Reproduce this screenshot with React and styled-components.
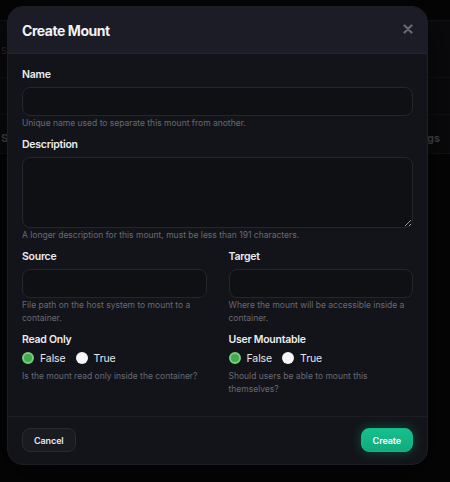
import styled, { createGlobalStyle } from "styled-components";

const GlobalStyle = createGlobalStyle`
  html, body {
    margin: 0;
    padding: 0;
    background: #050506;
    font-family: Inter, "Noto Sans", sans-serif;
    -webkit-font-smoothing: antialiased;
  }
  * { box-sizing: border-box; }
`;

export default function App() {
  return (
    <>
      <GlobalStyle />
      <Page>
        <BackPanel>
          <BackRow $height={57}>
            <BackSmall>Servers</BackSmall>
          </BackRow>
          <BackRow $height={37} />
          <BackRow $height={39} $split>
            <BackTitle>Sc</BackTitle>
            <BackTitle>Settings</BackTitle>
          </BackRow>
        </BackPanel>

        <Modal>
          <Header>
            <Title>Create Mount</Title>
            <CloseButton aria-label="Close">
              <svg width="10" height="10" viewBox="0 0 10 10">
                <path d="M1.5 1.5 L8.5 8.5 M8.5 1.5 L1.5 8.5" stroke="currentColor" strokeWidth="2.3" strokeLinecap="round" />
              </svg>
            </CloseButton>
          </Header>

          <Body>
            <Field>
              <Label>Name</Label>
              <Input type="text" />
              <Help>Unique name used to separate this mount from another.</Help>
            </Field>

            <Field>
              <Label>Description</Label>
              <TextArea />
              <Help>A longer description for this mount, must be less than 191 characters.</Help>
            </Field>

            <Columns>
              <Field>
                <Label>Source</Label>
                <Input type="text" />
                <Help>File path on the host system to mount to a container.</Help>
              </Field>
              <Field>
                <Label>Target</Label>
                <Input type="text" />
                <Help>Where the mount will be accessible inside a container.</Help>
              </Field>
            </Columns>

            <Columns>
              <Field>
                <Label>Read Only</Label>
                <RadioGroup>
                  <RadioOption><Dot $checked />False</RadioOption>
                  <RadioOption><Dot />True</RadioOption>
                </RadioGroup>
                <Help>Is the mount read only inside the container?</Help>
              </Field>
              <Field>
                <Label>User Mountable</Label>
                <RadioGroup>
                  <RadioOption><Dot $checked />False</RadioOption>
                  <RadioOption><Dot />True</RadioOption>
                </RadioGroup>
                <Help>Should users be able to mount this themselves?</Help>
              </Field>
            </Columns>
          </Body>

          <Footer>
            <Button>Cancel</Button>
            <Button $primary>Create</Button>
          </Footer>
        </Modal>
      </Page>
    </>
  );
}

const Page = styled.div`
  position: relative;
  width: 450px;
  height: 482px;
  overflow: hidden;
  background: #050506;
  padding-top: 20px;
`;

const BackPanel = styled.div`
  background: #0a0a0c;
  border-top: 1px solid #121215;
`;

const BackRow = styled.div`
  height: ${({ $height }) => $height}px;
  border-bottom: 1px solid #121215;
  display: flex;
  align-items: center;
  justify-content: ${({ $split }) => ($split ? "space-between" : "flex-start")};
  padding: 0 10px 0 1px;
`;

const BackSmall = styled.span`
  font-size: 9px;
  color: #2e2e33;
  margin-top: 2px;
`;

const BackTitle = styled.span`
  font-size: 11px;
  font-weight: 600;
  color: #4a4a50;
  margin-top: 8px;
`;

const Modal = styled.div`
  position: absolute;
  left: 7px;
  top: 6px;
  width: 421px;
  background: #131419;
  border: 1px solid #1d1e25;
  border-radius: 16px;
  overflow: hidden;
  box-shadow: 0 10px 40px rgba(0, 0, 0, 0.6);
`;

const Header = styled.div`
  height: 47px;
  background: #1b1c25;
  border-bottom: 1px solid #24252e;
  display: flex;
  align-items: center;
  justify-content: space-between;
  padding: 0 14px 0 14px;
`;

const Title = styled.h2`
  margin: 0;
  font-size: 14px;
  font-weight: 700;
  color: #f2f2f4;
  letter-spacing: -0.45px;
`;

const CloseButton = styled.button`
  border: 0;
  background: none;
  padding: 0;
  color: #66676f;
  display: flex;
  margin-top: -3px;
`;

const Body = styled.div`
  padding: 14px 14px 20px 14px;
  display: flex;
  flex-direction: column;
  gap: 8px;
`;

const Columns = styled.div`
  display: grid;
  grid-template-columns: 1fr 1fr;
  column-gap: 22px;
`;

const Field = styled.div`
  display: flex;
  flex-direction: column;
`;

const Label = styled.label`
  font-size: 10.5px;
  line-height: 14px;
  font-weight: 600;
  color: #ececef;
  margin-bottom: 5px;
  letter-spacing: -0.25px;
`;

const Input = styled.input`
  height: 29px;
  width: 100%;
  background: #0f1014;
  border: 1px solid #25262d;
  border-radius: 8px;
  color: #e5e5e8;
  font-family: inherit;
  font-size: 11px;
  padding: 0 10px;
  outline: none;
`;

const TextArea = styled.textarea`
  height: 71px;
  width: 100%;
  background: #0f1014;
  border: 1px solid #25262d;
  border-radius: 8px;
  color: #e5e5e8;
  font-family: inherit;
  font-size: 11px;
  padding: 8px 10px;
  outline: none;
  resize: vertical;
  display: block;
`;

const Help = styled.p`
  margin: 1px 0 0;
  font-size: 8.5px;
  line-height: 13px;
  color: #686a74;
`;

const RadioGroup = styled.div`
  display: flex;
  align-items: center;
  gap: 10px;
  height: 14px;
  margin: 0 0 3px;
`;

const RadioOption = styled.span`
  display: inline-flex;
  align-items: center;
  gap: 6px;
  font-size: 10.5px;
  color: #e6e6ea;
  line-height: 14px;
  letter-spacing: -0.1px;
`;

const Dot = styled.span`
  width: 12px;
  height: 12px;
  border-radius: 50%;
  margin-top: -3px;
  background: ${({ $checked }) => ($checked ? "#45a94f" : "#f7f7f7")};
  border: ${({ $checked }) => ($checked ? "2px solid #76cf7b" : "none")};
`;

const Footer = styled.div`
  border-top: 1px solid #1c1d24;
  display: flex;
  justify-content: space-between;
  align-items: flex-start;
  padding: 11px 14px 12px 14px;
`;

const Button = styled.button`
  height: 24px;
  padding: 0 11px;
  border-radius: 8px;
  font-family: inherit;
  font-size: 9px;
  font-weight: 600;
  letter-spacing: -0.1px;
  color: ${({ $primary }) => ($primary ? "#ffffff" : "#e4e4e8")};
  background: ${({ $primary }) => ($primary ? "linear-gradient(#16c08f, #10ab7e)" : "#1a1b20")};
  border: 1px solid ${({ $primary }) => ($primary ? "#17b888" : "#2a2b31")};
  box-shadow: ${({ $primary }) => ($primary ? "0 0 12px rgba(20, 190, 140, 0.35)" : "none")};
`;
